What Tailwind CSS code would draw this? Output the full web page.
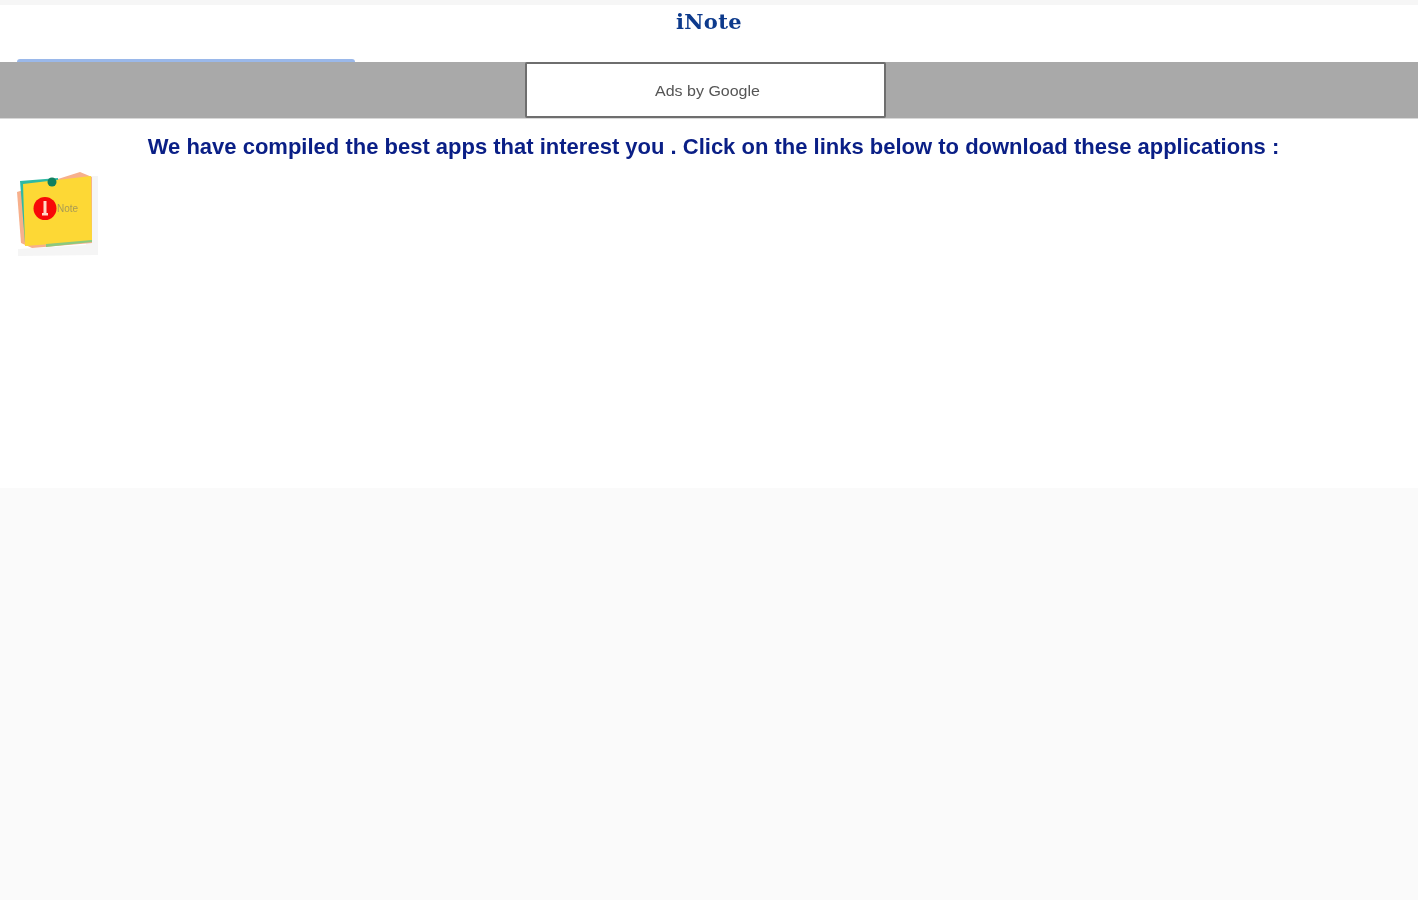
<!DOCTYPE html>
<html lang="en">
<head>
    <meta charset="UTF-8">
    <title>iNote</title>
    <script src="https://cdn.jsdelivr.net/npm/@tailwindcss/browser@4"></script>
</head>
<body class="bg-[#fafafa] font-['Liberation_Sans',sans-serif] h-[900px] overflow-hidden">
    <div class="h-[5px] bg-[#f6f6f6]"></div>

    <div class="bg-white h-[483px]">
        <!-- Title -->
        <div class="relative h-[57px]">
            <h1 class="pt-[4px] text-center font-['DejaVu_Serif',serif] font-bold text-[21px] leading-[25px] tracking-[0.4px] text-[#0d3a8c] blur-[0.5px]">iNote</h1>
            <div class="absolute left-[17px] bottom-0 w-[338px] h-[3px] bg-[#9ab8ea] rounded-t-sm blur-[0.4px]"></div>
        </div>

        <!-- Ad strip -->
        <div class="flex justify-center h-[57px] bg-[#a9a9a9] border-b border-[#d8d8d8]">
            <div class="flex items-center justify-center w-[361px] h-[56px] -ml-[8px] bg-white border-2 border-[#6e6e6e] rounded-[2px]">
                <span class="pl-[5px] pt-[3px] text-[16px] scale-y-90 text-[#555] blur-[0.5px]">Ads by Google</span>
            </div>
        </div>

        <h2 class="mt-[14px] text-center font-bold text-[22px] leading-[28px] text-[#0a1f86] blur-[0.4px] pl-[9px]">We have compiled the best apps that interest you . Click on the links below to download these applications :</h2>

        <!-- App icon -->
        <div class="mt-[10px] ml-[16px] w-[84px] h-[88px] blur-[0.7px]">
            <svg viewBox="0 0 84 88" width="84" height="88">
                <path d="M70 5 L82 5 L82 84 L2 85 L2 78 L70 74 Z" fill="#f5f5f5"/>
                <path d="M1 21 L64 1 L76 6 L76 72 L16 77 L5 72 Z" fill="#f7b08c"/>
                <path d="M4 10 L42 7 L42 70 L9 72 Z" fill="#2fb9a3"/>
                <path d="M7 13 L75 5 L76 70 L9 75 Z" fill="#fdd835"/>
                <path d="M30 73 L76 69 L76 71 L30 76 Z" fill="#8cc97e"/>
                <circle cx="36" cy="11" r="4.5" fill="#11805f"/>
                <circle cx="29" cy="37.5" r="11.5" fill="#f80808"/>
                <rect x="27.5" y="30" width="3" height="12" fill="#ffd9c8"/>
                <rect x="26" y="42" width="6" height="2.5" fill="#ffd9c8"/>
                <text x="41" y="41" font-family="Liberation Sans, sans-serif" font-size="10" fill="#a89a55">Note</text>
            </svg>
        </div>
    </div>
</body>
</html>
